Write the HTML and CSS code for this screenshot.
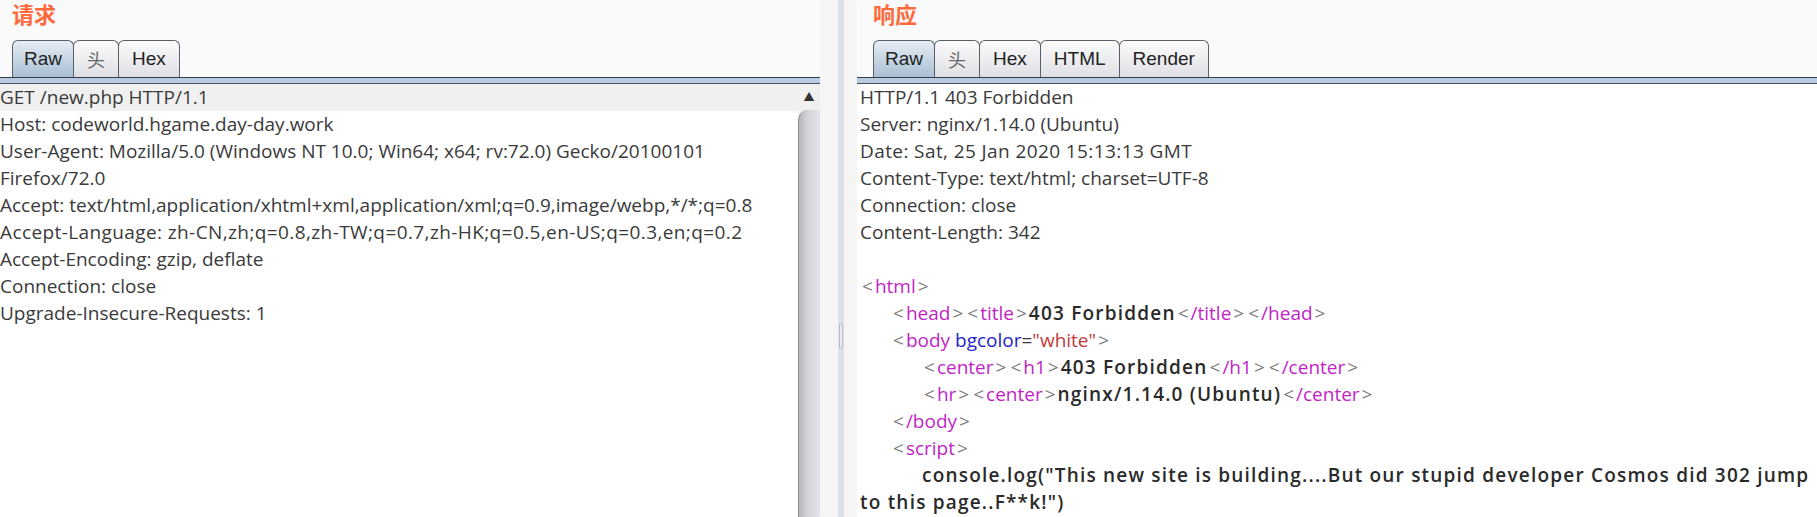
FILE: index.html
```html
<!DOCTYPE html>
<html lang="zh">
<head>
  <meta charset="UTF-8" />
  <title>请求 / 响应</title>
  <link rel="stylesheet" href="styles.css">
</head>
<body>
  <div class="pane pane-req">
    <div class="pane-head">
      <h2 class="pane-title">请求</h2>
      <div class="tabs">
        <span class="tab active">Raw</span>
        <span class="tab cjk">头</span>
        <span class="tab">Hex</span>
      </div>
    </div>
    <div class="pane-body">
      <div class="editor">
        <div class="line current">GET /new.php HTTP/1.1</div>
        <div class="line">Host: codeworld.hgame.day-day.work</div>
        <div class="line">User-Agent: Mozilla/5.0 (Windows NT 10.0; Win64; x64; rv:72.0) Gecko/20100101</div>
        <div class="line">Firefox/72.0</div>
        <div class="line">Accept: text/html,application/xhtml+xml,application/xml;q=0.9,image/webp,*/*;q=0.8</div>
        <div class="line wide">Accept-Language: zh-CN,zh;q=0.8,zh-TW;q=0.7,zh-HK;q=0.5,en-US;q=0.3,en;q=0.2</div>
        <div class="line">Accept-Encoding: gzip, deflate</div>
        <div class="line">Connection: close</div>
        <div class="line">Upgrade-Insecure-Requests: 1</div>
      </div>
      <div class="scrollbar">
        <div class="scroll-up">&#9650;</div>
        <div class="scroll-thumb"></div>
      </div>
    </div>
  </div>

  <div class="splitter">
    <div class="splitter-bar"><span class="grip"></span></div>
  </div>

  <div class="pane pane-res">
    <div class="pane-head">
      <h2 class="pane-title">响应</h2>
      <div class="tabs">
        <span class="tab active">Raw</span>
        <span class="tab cjk">头</span>
        <span class="tab">Hex</span>
        <span class="tab">HTML</span>
        <span class="tab">Render</span>
      </div>
    </div>
    <div class="pane-body">
      <div class="editor">
        <div class="line">HTTP/1.1 403 Forbidden</div>
        <div class="line">Server: nginx/1.14.0 (Ubuntu)</div>
        <div class="line wide">Date: Sat, 25 Jan 2020 15:13:13 GMT</div>
        <div class="line">Content-Type: text/html; charset=UTF-8</div>
        <div class="line">Connection: close</div>
        <div class="line">Content-Length: 342</div>
        <div class="line">&nbsp;</div>
        <div class="line"><span class="br">&lt;</span><span class="tag">html</span><span class="br">&gt;</span></div>
        <div class="line ind1"><span class="br">&lt;</span><span class="tag">head</span><span class="br">&gt;</span><span class="br">&lt;</span><span class="tag">title</span><span class="br">&gt;</span><b>403 Forbidden</b><span class="br">&lt;</span><span class="tag">/title</span><span class="br">&gt;</span><span class="br">&lt;</span><span class="tag">/head</span><span class="br">&gt;</span></div>
        <div class="line ind1"><span class="br">&lt;</span><span class="tag">body</span> <span class="attr">bgcolor</span>=<span class="val">"white"</span><span class="br">&gt;</span></div>
        <div class="line ind2"><span class="br">&lt;</span><span class="tag">center</span><span class="br">&gt;</span><span class="br">&lt;</span><span class="tag">h1</span><span class="br">&gt;</span><b>403 Forbidden</b><span class="br">&lt;</span><span class="tag">/h1</span><span class="br">&gt;</span><span class="br">&lt;</span><span class="tag">/center</span><span class="br">&gt;</span></div>
        <div class="line ind2"><span class="br">&lt;</span><span class="tag">hr</span><span class="br">&gt;</span><span class="br">&lt;</span><span class="tag">center</span><span class="br">&gt;</span><b>nginx/1.14.0 (Ubuntu)</b><span class="br">&lt;</span><span class="tag">/center</span><span class="br">&gt;</span></div>
        <div class="line ind1"><span class="br">&lt;</span><span class="tag">/body</span><span class="br">&gt;</span></div>
        <div class="line ind1"><span class="br">&lt;</span><span class="tag">script</span><span class="br">&gt;</span></div>
        <div class="line ind2"><b>console.log("This new site is building....But our stupid developer Cosmos did 302 jump</b></div>
        <div class="line"><b>to this page..F**k!")</b></div>
      </div>
    </div>
  </div>
</body>
</html>
```

FILE: styles.css
```css
body {
  margin: 0;
  height: 517px;
  overflow: hidden;
  display: flex;
  background: #fafafa;
  font-family: "Open Sans", "Noto Sans", "Noto Sans CJK SC", sans-serif;
  color: #3a3a3a;
}

.pane {
  display: flex;
  flex-direction: column;
}

.pane-req {
  width: 820px;
}

.pane-res {
  flex: 1;
  min-width: 0;
}

.pane-head {
  height: 77px;
  display: flex;
  flex-direction: column;
  justify-content: space-between;
}

.pane-title {
  margin: 0;
  padding: 0 0 0 12px;
  font-family: "Noto Sans CJK SC", sans-serif;
  font-size: 22px;
  font-weight: bold;
  line-height: 27px;
  color: #ff6a3d;
}

.pane-res .pane-title {
  padding-left: 16px;
}

.tabs {
  display: flex;
  padding-left: 12px;
}

.pane-res .tabs {
  padding-left: 16px;
}

.tab {
  height: 36px;
  padding: 0 13px;
  display: flex;
  align-items: center;
  font-family: "Liberation Sans", Arial, sans-serif;
  font-size: 19px;
  color: #222;
  border: 1px solid #5a606a;
  border-bottom: none;
  border-radius: 6px 6px 0 0;
  background: linear-gradient(#fbfbfc, #dfe0e4);
  margin-right: -1px;
}

.tab.cjk {
  font-family: "Noto Sans CJK SC", sans-serif;
  font-size: 18px;
  color: #666;
  padding: 0 13px;
}

.tab.active {
  background: linear-gradient(#e6edf4, #a9bfd4);
  padding: 0 11px;
}

.pane-body {
  flex: 1;
  display: flex;
  min-height: 0;
  border-top: 1px solid #353c48;
  box-shadow: inset 0 5px 0 #b6cbe1, inset 0 6px 0 #4a505c;
  padding-top: 6px;
  background: #fff;
}

.pane-res .pane-body {
  padding-left: 3px;
}

.editor {
  flex: 1;
  min-width: 0;
  overflow: hidden;
  font-size: 19px;
  line-height: 27px;
}

.line {
  white-space: nowrap;
}

.line.wide {
  letter-spacing: 0.4px;
}

.line.current {
  background: #f0f0f0;
}

.ind1 {
  padding-left: 31px;
}

.ind2 {
  padding-left: 62px;
}

.line b {
  font-weight: 600;
  letter-spacing: 1.2px;
  color: #2a2a2a;
}

.br {
  color: #777;
  padding: 0 2px;
}

.tag {
  color: #c21fc7;
}

.attr {
  color: #2323c8;
}

.val {
  color: #c43a3a;
}

.scrollbar {
  width: 22px;
  display: flex;
  flex-direction: column;
  background: #f0f0f0;
}

.scroll-up {
  height: 26px;
  text-align: center;
  font-size: 11px;
  line-height: 26px;
  color: #333;
}

.scroll-thumb {
  flex: 1;
  border-radius: 10px 0 0 0;
  border-left: 1px solid #8a8d94;
  background: linear-gradient(90deg, #b5b7be, #d3d5db 40%, #e2e4e9);
}

.splitter {
  width: 37px;
  display: flex;
  justify-content: center;
  background: #f5f5f5;
}

.splitter-bar {
  width: 6px;
  margin-left: 4px;
  background: #dde0e6;
  display: flex;
  align-items: flex-start;
  justify-content: center;
}

.grip {
  width: 4px;
  height: 26px;
  margin-top: 323px;
  border: 1px solid #b9bdc6;
  border-radius: 3px;
  background: #e8eaee;
  box-sizing: border-box;
}
```
